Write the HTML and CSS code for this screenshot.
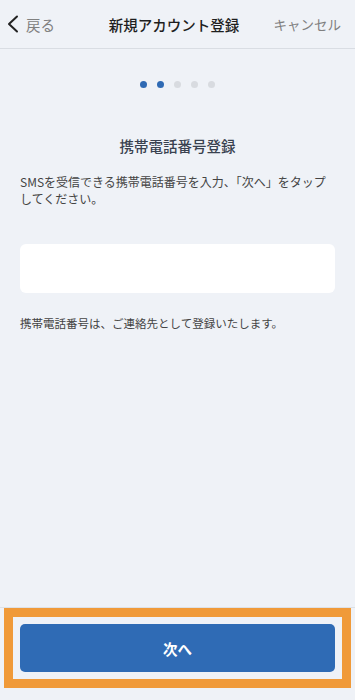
FILE: index.html
```html
<!DOCTYPE html>
<html lang="ja">
<head>
<meta charset="utf-8">
<link rel="stylesheet" href="styles.css">
</head>
<body>
<div class="app">
  <header class="nav">
    <div class="nav-back">
      <svg class="chev" width="12" height="18" viewBox="0 0 12 18"><path d="M10 1.5 L2 9 L10 16.5" fill="none" stroke="#222" stroke-width="2" stroke-linecap="round" stroke-linejoin="round"/></svg>
      <span>戻る</span>
    </div>
    <div class="nav-title">新規アカウント登録</div>
    <div class="nav-cancel">キャンセル</div>
  </header>
  <main class="content">
    <div class="steps">
      <span class="dot on"></span><span class="dot on"></span><span class="dot"></span><span class="dot"></span><span class="dot"></span>
    </div>
    <h1 class="title">携帯電話番号登録</h1>
    <p class="desc">SMSを受信できる携帯電話番号を入力、「次へ」をタップしてください。</p>
    <input class="field" type="tel" aria-label="携帯電話番号">
    <p class="note">携帯電話番号は、ご連絡先として登録いたします。</p>
  </main>
  <footer class="footer">
    <button class="next">次へ</button>
    <div class="highlight"></div>
  </footer>
</div>
</body>
</html>
```
FILE: styles.css
```css
* { box-sizing: border-box; }
html, body { margin: 0; padding: 0; }
body {
  background: #eff2f7;
  font-family: "Noto Sans CJK JP", "Noto Sans", sans-serif;
  color: #333;
}
.app {
  min-height: 700px;
  display: flex;
  flex-direction: column;
}
.nav {
  height: 49px;
  border-bottom: 1px solid #d9dde3;
  display: flex;
  align-items: center;
  justify-content: space-between;
  padding: 0 14px 0 7px;
}
.nav-back {
  display: flex;
  align-items: center;
  gap: 7px;
  font-size: 14.5px;
  color: #808080;
  width: 80px;
}
.chev { display: block; }
.nav-title {
  font-size: 14.5px;
  font-weight: 500;
  color: #1e1e1e;
}
.nav-cancel {
  font-size: 13.5px;
  color: #7f7f7f;
  width: 80px;
  text-align: right;
}
.content {
  flex: 1;
  padding: 0 20px;
}
.steps {
  display: flex;
  justify-content: center;
  gap: 10px;
  padding-top: 32px;
}
.dot {
  width: 7px;
  height: 7px;
  border-radius: 50%;
  background: #d8dbe0;
}
.dot.on { background: #2f6ab4; }
.title {
  margin: 48px 0 0;
  text-align: center;
  font-size: 14.5px;
  font-weight: 500;
  color: #3a4250;
  line-height: 20px;
}
.desc {
  margin: 17px 0 0;
  font-size: 12px;
  line-height: 17px;
  color: #444;
}
.field {
  display: block;
  width: 100%;
  height: 49px;
  margin-top: 37px;
  border: none;
  border-radius: 6px;
  background: #fff;
  outline: none;
}
.note {
  margin: 22px 0 0;
  font-size: 11.5px;
  line-height: 16px;
  color: #444;
}
.footer {
  position: relative;
  border-top: 1px solid #dde1e6;
  padding: 16px 20px 28px;
}
.next {
  display: block;
  width: 100%;
  height: 48px;
  border: none;
  border-radius: 5px;
  background: #2f6bb5;
  color: #fff;
  font-family: inherit;
  font-size: 14.5px;
  font-weight: 700;
}
.highlight {
  position: absolute;
  left: 4px;
  right: 4px;
  top: 0;
  height: 80px;
  border: 9px solid #f09a39;
  pointer-events: none;
}
```
